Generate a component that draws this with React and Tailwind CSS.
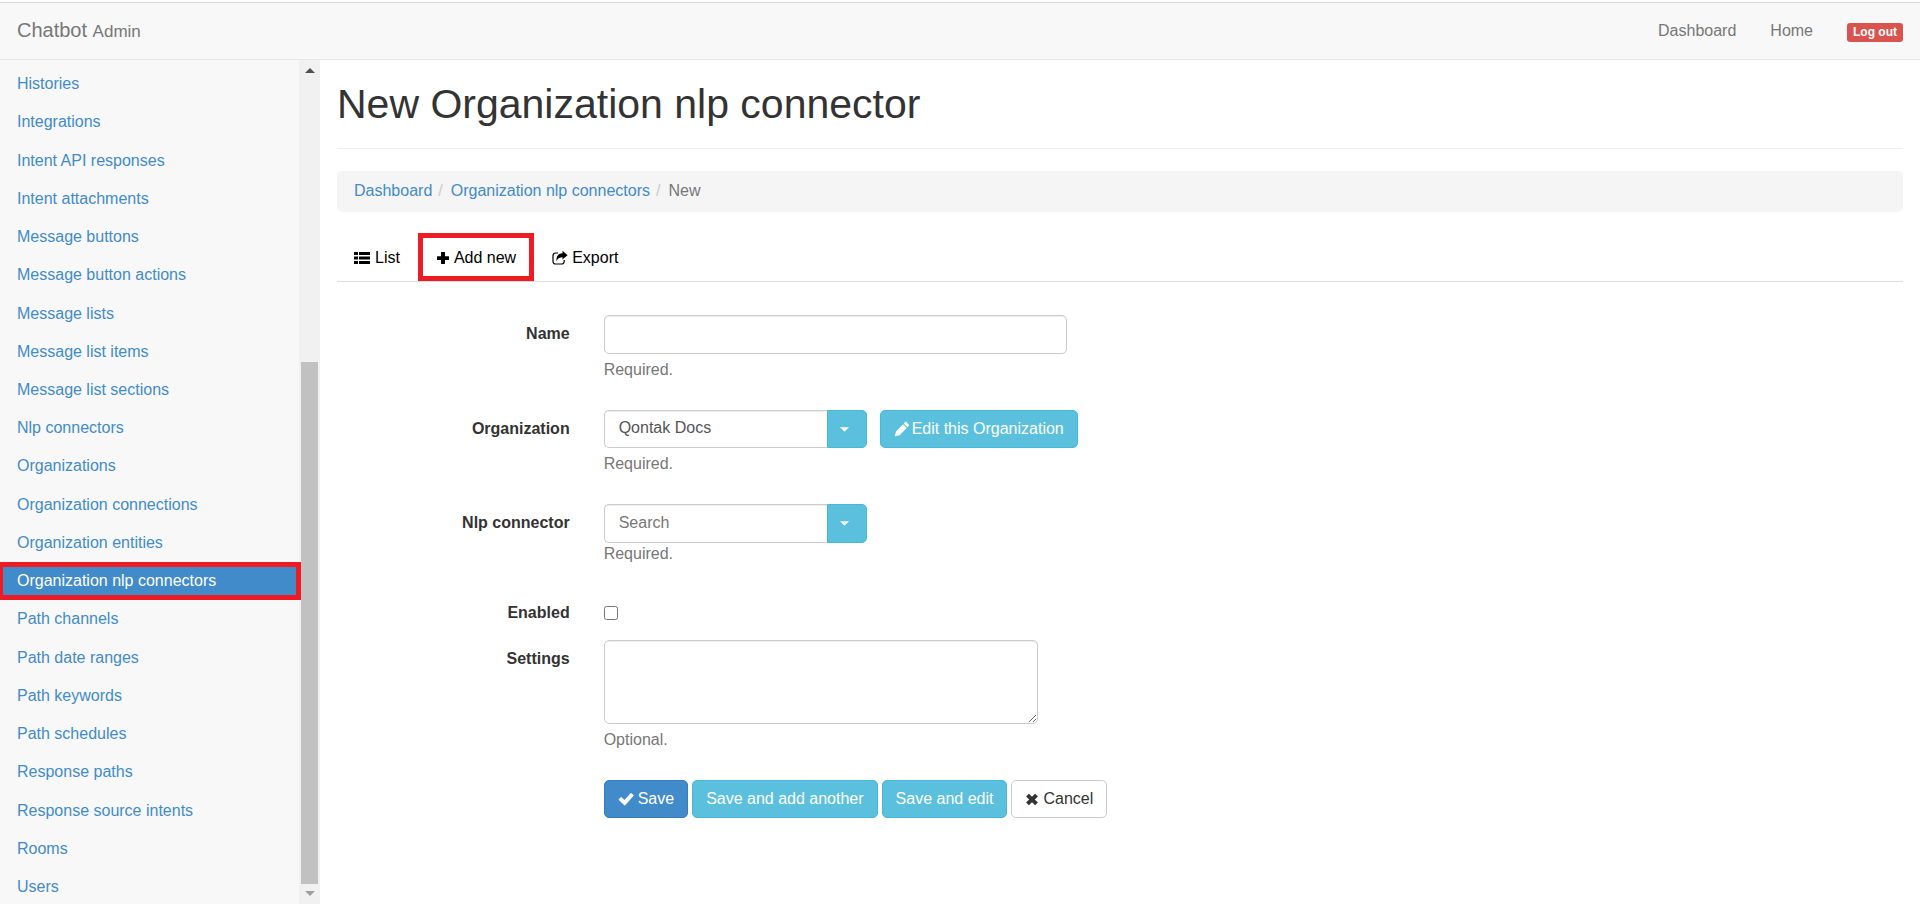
import React from "react";

const navItems = [
  "Histories",
  "Integrations",
  "Intent API responses",
  "Intent attachments",
  "Message buttons",
  "Message button actions",
  "Message lists",
  "Message list items",
  "Message list sections",
  "Nlp connectors",
  "Organizations",
  "Organization connections",
  "Organization entities",
  "Organization nlp connectors",
  "Path channels",
  "Path date ranges",
  "Path keywords",
  "Path schedules",
  "Response paths",
  "Response source intents",
  "Rooms",
  "Users",
];

const activeItem = "Organization nlp connectors";

function ListIcon() {
  return (
    <svg viewBox="0 0 16 16" className="size-4" fill="currentColor" aria-hidden="true">
      <path d="M0 2h4v3H0zM5 2h11v3H5zM0 6.500h4v3H0zM5 6.500h11v3H5zM0 11h4v3H0zM5 11h11v3H5z" />
    </svg>
  );
}

function PlusIcon() {
  return (
    <svg viewBox="0 0 14 16" className="h-4 w-3.5" fill="currentColor" aria-hidden="true">
      <path d="M5.500 2h3a.5.500 0 0 1 .5.500V6.300h3.500a.5.500 0 0 1 .5.500v2.600a.5.500 0 0 1-.5.500H9v3.600a.5.500 0 0 1-.5.500h-3a.5.500 0 0 1-.5-.500V9.900H1.500a.5.500 0 0 1-.5-.500V6.800a.5.500 0 0 1 .5-.500H5V2.500a.5.500 0 0 1 .5-.500z" />
    </svg>
  );
}

function ShareIcon() {
  return (
    <svg viewBox="0 0 16 16" className="size-4" fill="none" aria-hidden="true">
      <path d="M6 3H3.500A2.500 2.500 0 0 0 1 5.500v6A2.500 2.500 0 0 0 3.500 14h6.200a2.500 2.500 0 0 0 2.500-2.500V10" stroke="currentColor" strokeWidth="1.200" />
      <path d="M10.500 .8L15.600 5.200 10.500 9.600V7.200C7.800 7.200 6 8.200 4.300 11 4.300 6 6.500 3.300 10.500 3.200z" fill="currentColor" />
    </svg>
  );
}

function PencilIcon() {
  return (
    <svg viewBox="0 0 16 16" className="size-4" fill="currentColor" aria-hidden="true">
      <path d="M10.900 1.300a1.200 1.200 0 0 1 1.700 0l2.100 2.100a1.200 1.200 0 0 1 0 1.700l-1.200 1.200-3.800-3.800zM9 3.200L12.800 7l-7.300 7.300L.9 15.300l1-4.800z" />
    </svg>
  );
}

function CheckIcon() {
  return (
    <svg viewBox="0 0 16 16" className="size-4" fill="currentColor" aria-hidden="true">
      <path d="M13.200 2.200l2.300 1.900a.5.500 0 0 1 .1.700L7.200 14.300a.6.600 0 0 1-.9 0L.8 8.900a.5.500 0 0 1 0-.7l2-2a.5.500 0 0 1 .7 0l3 2.700 6-6.600a.5.500 0 0 1 .7-.1z" />
    </svg>
  );
}

function RemoveIcon() {
  return (
    <svg viewBox="0 0 14 16" className="h-4 w-3.5" fill="currentColor" aria-hidden="true">
      <path d="M3.900 2.700L7 5.800l3.100-3.100 2.800 2.800L9.800 8.500l3.100 3-2.800 2.800L7 11.200l-3.100 3.100-2.800-2.800 3.100-3-3.100-3z" />
    </svg>
  );
}

function Triangle({ up = false, className }) {
  return (
    <svg viewBox="0 0 10 5" className={className} fill="currentColor" aria-hidden="true">
      <path d={up ? "M0 5L5 0l5 5z" : "M0 0h10L5 5z"} />
    </svg>
  );
}

function Header() {
  return (
    <header className="flex h-[60px] shrink-0 flex-col border-b border-[#e7e7e7] bg-[#f8f8f8]">
      <div className="h-[3px] shrink-0 border-b border-[#dadada] bg-white" />
      <div className="flex flex-1 items-center justify-between px-[17px] pb-px">
        <a href="#" className="text-[20px] text-[#777]">
          Chatbot <small className="text-[17px]">Admin</small>
        </a>
        <nav className="flex items-center gap-[34px] text-[#777]">
          <a href="#">Dashboard</a>
          <a href="#">Home</a>
          <a href="#" className="mt-[3px] rounded-[3px] bg-[#d9534f] px-1.5 text-[12px] leading-[19px] font-bold text-white">
            Log out
          </a>
        </nav>
      </div>
    </header>
  );
}

function Sidebar() {
  return (
    <aside className="flex w-80 shrink-0 overflow-hidden bg-[#f8f8f8]">
      <nav className="-mb-0.5 w-[299px] shrink-0 pt-[5px]">
        <ul className="flex h-full flex-col text-[#428bca]">
          {navItems.map((item) =>
            item === activeItem ? (
              <li key={item} className="relative z-10 -mr-0.5 flex-1">
                <a
                  href="#"
                  className="flex h-full items-center border-y-[5px] border-r-[5px] border-l-[3px] border-[#ed1c24] bg-[#428bca] pl-3.5 text-white"
                >
                  {item}
                </a>
              </li>
            ) : (
              <li key={item} className="flex-1">
                <a href="#" className="flex h-full items-center pl-[17px]">
                  {item}
                </a>
              </li>
            )
          )}
        </ul>
      </nav>
      <div className="flex flex-1 flex-col items-center bg-[#f1f1f1] text-[#505050]">
        <Triangle up className="my-2 h-[5px] w-[10px] shrink-0" />
        <div className="flex w-full flex-1 flex-col px-0.5">
          <div className="flex-[281]" />
          <div className="flex-[522] bg-[#c1c1c1]" />
        </div>
        <Triangle className="mt-[7px] mb-2 h-[5px] w-[10px] shrink-0 text-[#a0a0a0]" />
      </div>
    </aside>
  );
}

function Row({ label, htmlFor, className, children }) {
  return (
    <div className={"grid grid-cols-[1fr_5fr] " + className}>
      <label htmlFor={htmlFor} className="px-[17px] pt-2 text-right font-bold text-[#333]">
        {label}
      </label>
      <div className="px-[17px]">{children}</div>
    </div>
  );
}

const fieldStyle =
  "border border-[#ccc] bg-white px-3.5 text-[#555] shadow-[inset_0_1px_1px_rgba(0,0,0,0.075)] outline-none placeholder:text-[#777]";

function Combo({ id, height, ...rest }) {
  return (
    <div className={"flex " + height}>
      <input id={id} type="text" className={"w-[223px] rounded-l-[5px] border-r-0 pb-0.5 " + fieldStyle} {...rest} />
      <button
        type="button"
        aria-label="Show options"
        className="flex w-10 items-center justify-center rounded-r-[5px] border border-[#46b8da] bg-[#5bc0de] pr-1 text-white"
      >
        <Triangle className="h-[5px] w-[9px]" />
      </button>
    </div>
  );
}

const buttonBase = "flex h-[38px] items-center gap-1 rounded-[5px] border px-[13px]";
const infoButton = buttonBase + " border-[#46b8da] bg-[#5bc0de] text-white";

export default function App() {
  return (
    <div className="flex min-h-screen flex-col bg-white font-['Liberation_Sans',Arial,sans-serif] text-[16px] leading-[22px]">
      <Header />
      <div className="flex flex-1">
        <Sidebar />
        <main className="min-w-0 flex-1 px-[17px]">
          <h1 className="border-b border-[#eee] pt-[22px] pb-[22px] text-[41px] leading-[44px] text-[#333]">
            New Organization nlp connector
          </h1>
          <nav aria-label="Breadcrumb" className="mt-[22px] flex h-[41px] items-center rounded-[5px] bg-[#f5f5f5] px-[17px] pb-0.5">
            <a href="#" className="text-[#428bca]">Dashboard</a>
            <span className="pr-2 pl-1.5 text-[#ccc]">/</span>
            <a href="#" className="text-[#428bca]">Organization nlp connectors</a>
            <span className="pr-2 pl-1.5 text-[#ccc]">/</span>
            <span className="text-[#777]">New</span>
          </nav>
          <div className="mt-[21px] flex h-[49px] gap-px border-b border-[#ddd] text-black">
            <a href="#" className="flex items-center gap-[5px] px-[17px] pt-0.5">
              <ListIcon /> List
            </a>
            <a href="#" className="flex items-center gap-1 border-[5px] border-[#ed1c24] px-[13px] pt-0.5">
              <PlusIcon /> Add new
            </a>
            <a href="#" className="flex items-center gap-1 px-[17px] pt-0.5">
              <ShareIcon /> Export
            </a>
          </div>
          <form className="-mx-[17px] mt-[33px] text-[#777]" onSubmit={(e) => e.preventDefault()}>
            <Row label="Name" htmlFor="name" className="mb-[29px]">
              <input id="name" type="text" className={"block h-[39px] w-[463px] rounded-[5px] " + fieldStyle} />
              <p className="mt-[5px]">Required.</p>
            </Row>
            <Row label="Organization" htmlFor="organization" className="mb-[29px]">
              <div className="flex gap-[13px]">
                <Combo id="organization" height="h-[38px]" defaultValue="Qontak Docs" />
                <button type="button" className={infoButton}>
                  <span className="flex items-center gap-0.5">
                    <PencilIcon /> Edit this Organization
                  </span>
                </button>
              </div>
              <p className="mt-[5px]">Required.</p>
            </Row>
            <Row label="Nlp connector" htmlFor="nlp" className="mb-[29px]">
              <Combo id="nlp" height="h-[39px]" placeholder="Search" />
              <p>Required.</p>
            </Row>
            <Row label="Enabled" htmlFor="enabled" className="mb-4">
              <input id="enabled" type="checkbox" className="mt-3 block size-3.5" />
            </Row>
            <Row label="Settings" htmlFor="settings" className="mb-[29px]">
              <textarea id="settings" className={"block h-[84px] w-[434px] resize rounded-[5px] py-1.5 " + fieldStyle} />
              <p className="mt-[5px]">Optional.</p>
            </Row>
            <div className="grid grid-cols-[1fr_5fr]">
              <div className="col-start-2 flex gap-1 px-[17px]">
                <button type="submit" className={buttonBase + " border-[#357ebd] bg-[#428bca] text-white"}>
                  <CheckIcon /> Save
                </button>
                <button type="button" className={infoButton}>Save and add another</button>
                <button type="button" className={infoButton}>Save and edit</button>
                <button type="button" className={buttonBase + " border-[#ccc] bg-white text-[#333]"}>
                  <RemoveIcon /> Cancel
                </button>
              </div>
            </div>
          </form>
        </main>
      </div>
    </div>
  );
}
